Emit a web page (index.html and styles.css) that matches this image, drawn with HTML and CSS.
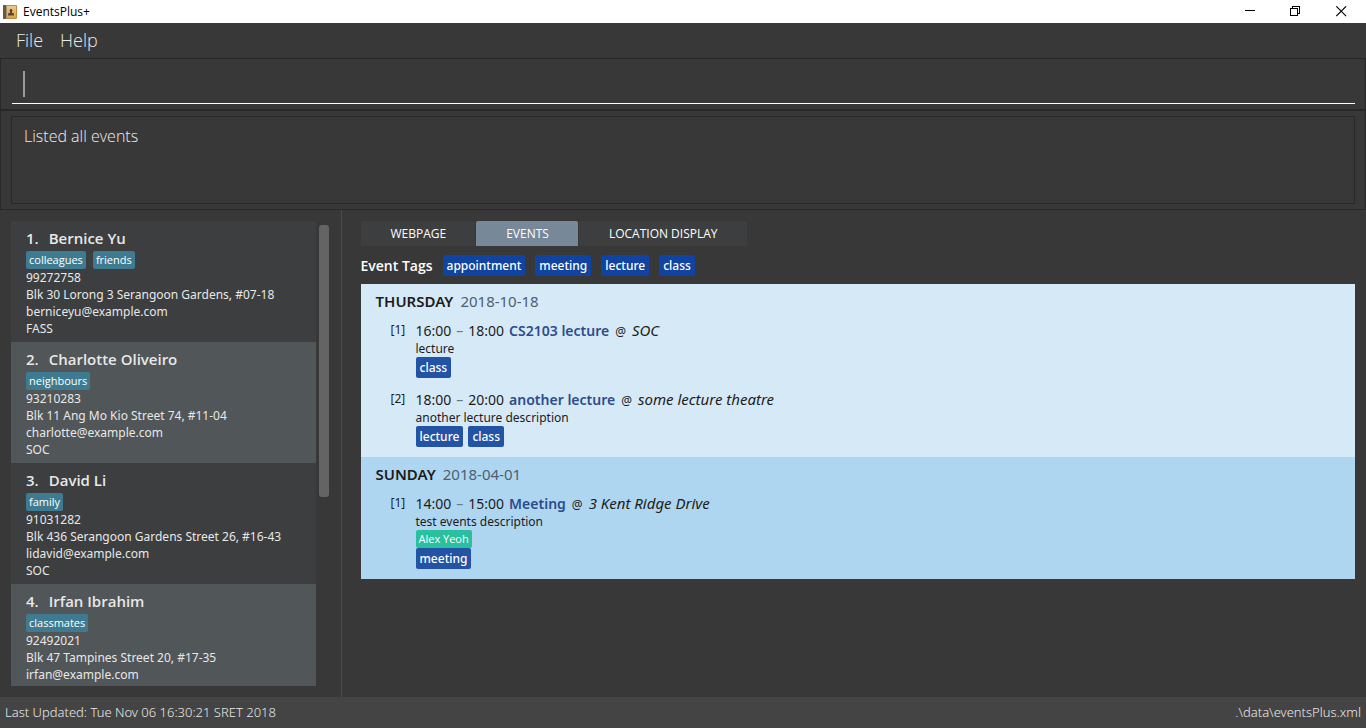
FILE: index.html
```html
<!DOCTYPE html>
<html lang="en">
<head>
<meta charset="utf-8">
<title>EventsPlus+</title>
<link rel="stylesheet" href="styles.css">
</head>
<body>
<header class="titlebar">
  <svg class="app-icon" width="14" height="14" viewBox="0 0 14 14" aria-hidden="true">
    <defs><linearGradient id="cover" x1="0" y1="0" x2="0" y2="1"><stop offset="0" stop-color="#ecc98c"/><stop offset="1" stop-color="#d9a24a"/></linearGradient></defs>
    <rect width="14" height="14" rx="1" fill="#c08a3c"/>
    <rect x="3" y="1" width="10" height="12" fill="url(#cover)"/>
    <rect width="3" height="14" rx="1" fill="#6b5640"/>
    <rect x="3" width="1" height="14" fill="#a8906c"/>
    <path d="M8 4a1.500 1.500 0 0 1 1 2.600v1.200l2 .7V10.500H5V8.500l2-.7V6.600a1.500 1.500 0 0 1 1-2.600z" fill="#5a4630"/>
  </svg>
  <h1 class="app-name">EventsPlus+</h1>
  <div class="window-controls">
    <button class="window-button" aria-label="Minimize"><svg width="11" height="11" viewBox="0 0 11 11" shape-rendering="crispEdges"><path d="M1 4.500h10" stroke="#000"/></svg></button>
    <button class="window-button" aria-label="Restore"><svg width="11" height="11" viewBox="0 0 11 11" fill="none" stroke="#000" shape-rendering="crispEdges"><path d="M.5 2.500h7v7h-7zM2.500 2.500v-2h7v7h-2"/></svg></button>
    <button class="window-button" aria-label="Close"><svg width="11" height="11" viewBox="0 0 11 11" stroke="#000" stroke-width="1.100"><path d="M.3 .3l9.800 9.800M10.100 .3L.3 10.100"/></svg></button>
  </div>
</header>
<nav class="menubar">
  <button class="menu">File</button>
  <button class="menu">Help</button>
</nav>
<section class="command-pane">
  <div class="command-line">
    <span class="caret"></span>
    <input class="command-input" type="text" aria-label="Command">
  </div>
</section>
<section class="result-pane">
  <textarea class="result" readonly aria-label="Result">Listed all events</textarea>
</section>
<main class="content">
  <aside class="people">
    <ol class="person-list">
      <li class="person">
        <h2 class="person-name"><span>1.</span><span>Bernice Yu</span></h2>
        <div class="person-tags"><span class="tag-small">colleagues</span><span class="tag-small">friends</span></div>
        <p>99272758</p><p>Blk 30 Lorong 3 Serangoon Gardens, #07-18</p><p>berniceyu@example.com</p><p>FASS</p>
      </li>
      <li class="person">
        <h2 class="person-name"><span>2.</span><span>Charlotte Oliveiro</span></h2>
        <div class="person-tags"><span class="tag-small">neighbours</span></div>
        <p>93210283</p><p>Blk 11 Ang Mo Kio Street 74, #11-04</p><p>charlotte@example.com</p><p>SOC</p>
      </li>
      <li class="person">
        <h2 class="person-name"><span>3.</span><span>David Li</span></h2>
        <div class="person-tags"><span class="tag-small">family</span></div>
        <p>91031282</p><p>Blk 436 Serangoon Gardens Street 26, #16-43</p><p>lidavid@example.com</p><p>SOC</p>
      </li>
      <li class="person">
        <h2 class="person-name"><span>4.</span><span>Irfan Ibrahim</span></h2>
        <div class="person-tags"><span class="tag-small">classmates</span></div>
        <p>92492021</p><p>Blk 47 Tampines Street 20, #17-35</p><p>irfan@example.com</p>
      </li>
    </ol>
    <div class="scroll-track"><div class="scroll-thumb"></div></div>
  </aside>
  <section class="detail">
    <div class="tabs" role="tablist">
      <button class="tab" role="tab" aria-selected="false">WEBPAGE</button>
      <button class="tab" role="tab" aria-selected="true">EVENTS</button>
      <button class="tab" role="tab" aria-selected="false">LOCATION DISPLAY</button>
    </div>
    <div class="event-tags">
      <h2 class="event-tags-title">Event Tags</h2>
      <span class="tag">appointment</span><span class="tag">meeting</span><span class="tag">lecture</span><span class="tag">class</span>
    </div>
    <div class="days">
      <section class="day">
        <h3 class="day-title"><span>THURSDAY</span><time>2018-10-18</time></h3>
        <article class="event">
          <span class="event-index">[1]</span>
          <div>
            <p class="event-line"><span>16:00</span><span class="dash">–</span><span>18:00</span><strong>CS2103 lecture</strong><span class="at">@</span><em>SOC</em></p>
            <p class="event-note">lecture</p>
            <div class="tag-row"><span class="tag">class</span></div>
          </div>
        </article>
        <article class="event">
          <span class="event-index">[2]</span>
          <div>
            <p class="event-line"><span>18:00</span><span class="dash">–</span><span>20:00</span><strong>another lecture</strong><span class="at">@</span><em>some lecture theatre</em></p>
            <p class="event-note">another lecture description</p>
            <div class="tag-row"><span class="tag">lecture</span><span class="tag">class</span></div>
          </div>
        </article>
      </section>
      <section class="day">
        <h3 class="day-title"><span>SUNDAY</span><time>2018-04-01</time></h3>
        <article class="event">
          <span class="event-index">[1]</span>
          <div>
            <p class="event-line"><span>14:00</span><span class="dash">–</span><span>15:00</span><strong>Meeting</strong><span class="at">@</span><em>3 Kent Ridge Drive</em></p>
            <p class="event-note">test events description</p>
            <div class="tag-row"><span class="tag-small attendee">Alex Yeoh</span></div>
            <div class="tag-row"><span class="tag">meeting</span></div>
          </div>
        </article>
      </section>
    </div>
  </section>
</main>
<footer class="statusbar"><span>Last Updated: Tue Nov 06 16:30:21 SRET 2018</span><span>.\data\eventsPlus.xml</span></footer>
</body>
</html>
```
FILE: styles.css
```css
* { box-sizing: border-box; }
body {
  margin: 0;
  height: 100vh;
  display: flex;
  flex-direction: column;
  overflow: hidden;
  background: #383838;
  color: #e8e8e8;
  font: 12px/17px "Noto Sans", "Open Sans", sans-serif;
}
h1, h2, h3, p, ol { margin: 0; padding: 0; }
ol { list-style: none; }
button { border: 0; padding: 0; background: none; color: inherit; font: inherit; }

.titlebar {
  display: flex;
  align-items: center;
  height: 23px;
  padding: 0 2px 0 3px;
  background: #fff;
  color: #000;
}
.app-name { margin-left: 6px; font: 400 12px/17px "Open Sans", sans-serif; }
.window-controls { display: flex; margin-left: auto; }
.window-button { width: 46px; height: 21px; display: grid; place-items: center; }

.menubar { display: flex; gap: 17px; height: 35px; padding: 0 16px; font: 300 18px/35px "Open Sans", sans-serif; }

.command-pane { height: 52px; padding: 0 10px 0 11px; border: 1px solid #282828; }
.command-line { display: flex; align-items: center; height: 45px; padding: 5px 11px 0; border-bottom: 1px solid #fff; }
.caret { width: 2px; height: 26px; background: #999; }
.command-input { flex: 1; min-width: 0; border: 0; outline: 0; background: none; color: #fff; font: 300 18px "Open Sans", sans-serif; }

.result-pane { height: 100px; padding: 5px 10px; border: 1px solid #282828; }
.result {
  display: block;
  width: 100%;
  height: 88px;
  padding: 8px 12px;
  border: 1px solid #282828;
  outline: 0;
  resize: none;
  background: none;
  color: #eee;
  font: 300 16px/22px "Open Sans", "Noto Sans", sans-serif;
}

.content { flex: 1; min-height: 0; display: flex; }
.people { display: flex; flex: 0 0 25%; gap: 3px; padding: 11px 12px 11px 11px; border-right: 1px solid #4d4d4d; }
.person-list { flex: 1; min-width: 0; overflow: hidden; }
.person { height: 121px; padding: 5px 15px; background: #3c3e3f; white-space: nowrap; }
.person:nth-child(even) { background: #515658; }
.person-name { display: flex; gap: 10px; font: 600 15px/25px "Open Sans", sans-serif; }
.person-tags { display: flex; gap: 7px; }
.scroll-track { width: 10px; padding: 4px 0; }
.scroll-thumb { height: 59.5%; border-radius: 3px; background: #646464; }

.tag-small { padding: 0 3px; border-radius: 2px; background: #3e7b91; color: #fff; font: 400 11px/18px "Open Sans", sans-serif; }
.attendee { background: #2abf9e; }
.tag { padding: 0 4px; border-radius: 2px; background: #2353a5; color: #fff; font-weight: 500; line-height: 21px; }
.tag-row { display: flex; gap: 5px; }

.detail { flex: 1; min-width: 0; padding: 11px 11px 11px 19px; }
.tabs { display: flex; gap: 1px; }
.tab { height: 25px; padding: 1px 29px 0 30px; border-radius: 2px 2px 0 0; background: #3c3e3f; color: #fff; font: 500 12px/24px "Open Sans", sans-serif; }
.tab[aria-selected="true"] { background: #778899; }
.event-tags { display: flex; gap: 10px; margin: 9px 0 8px; }
.event-tags-title { color: #fff; font: 600 14px/21px "Open Sans", sans-serif; }
.event-tags .tag { background: #1144a0; }

.days { color: #1c1c1c; }
.day { padding: 7px 15px 10px; background: #d6e9f7; }
.day:nth-child(even) { background: #aed6f0; }
.day-title { display: flex; gap: 7px; margin-bottom: 9px; font-size: 15px; font-weight: 600; line-height: 20px; }
.day-title time { color: #4e5f70; font-weight: 400; }
.event { display: flex; padding-left: 15px; }
.event + .event { margin-top: 11px; }
.event-index { width: 25px; font-size: 12px; line-height: 20px; }
.event-line { display: flex; align-items: baseline; gap: 5px; height: 20px; font-size: 14px; line-height: 20px; }
.event-line strong { color: #2c4c8c; font-weight: 600; }
.event-line em { font-size: 15px; }
.dash { color: #67788a; }
.at { margin: 0 1px; font-size: 12px; }

.statusbar { display: flex; align-items: center; justify-content: space-between; height: 31px; padding: 0 5px; background: #444; font-size: 13px; font-weight: 300; }
```
